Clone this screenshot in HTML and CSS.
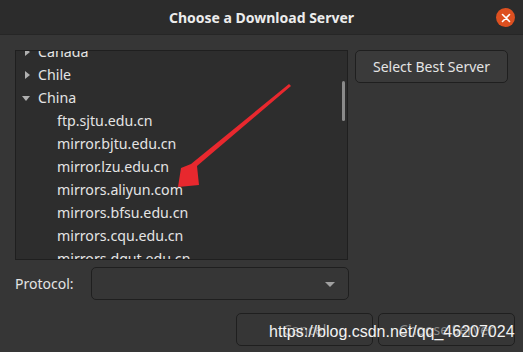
FILE: index.html
```html
<!DOCTYPE html>
<html lang="en">
<head>
  <meta charset="UTF-8">
  <title>Choose a Download Server</title>
  <link rel="stylesheet" href="styles.css">
</head>
<body>

<div class="dialog">
  <header class="titlebar">
    <h1>Choose a Download Server</h1>
    <span class="close-btn">
      <svg width="10" height="10" viewBox="0 0 10 10"><path d="M1.5 1.5 L8.5 8.5 M8.5 1.5 L1.5 8.5" stroke="#fff" stroke-width="1.6" stroke-linecap="round"/></svg>
    </span>
  </header>

  <div class="content">
    <div class="top-row">
      <!-- Lista de servidores -->
      <div class="tree">
        <ul class="tree-list">
          <li class="row"><span class="expander closed"></span>Canada</li>
          <li class="row"><span class="expander closed"></span>Chile</li>
          <li class="row"><span class="expander open"></span>China</li>
          <li class="row child">ftp.sjtu.edu.cn</li>
          <li class="row child">mirror.bjtu.edu.cn</li>
          <li class="row child">mirror.lzu.edu.cn</li>
          <li class="row child">mirrors.aliyun.com</li>
          <li class="row child">mirrors.bfsu.edu.cn</li>
          <li class="row child">mirrors.cqu.edu.cn</li>
          <li class="row child">mirrors.dgut.edu.cn</li>
        </ul>
        <div class="scrollbar"></div>
      </div>
      <div class="side">
        <button class="btn">Select Best Server</button>
      </div>
    </div>

    <div class="protocol-row">
      <label>Protocol:</label>
      <div class="combo">
        <span class="combo-arrow"></span>
      </div>
    </div>

    <div class="actions">
      <button class="btn action">Cancel</button>
      <button class="btn action">Choose Server</button>
    </div>
  </div>

  <!-- Flecha roja y marca de agua -->
  <svg class="arrow" width="523" height="352" viewBox="0 0 523 352">
    <polygon points="289,84 291,86 197,166 199,185 178,187 181,168 191,164" fill="#e8282e"/>
  </svg>
  <div class="watermark">https://blog.csdn.net/qq_46207024</div>
</div>

</body>
</html>
```

FILE: styles.css
```css
body {
  margin: 0;
  padding: 0;
  background: #363636;
  font-family: "Noto Sans", sans-serif;
}
.dialog {
  position: relative;
  width: 523px;
  height: 352px;
  background: #363636;
  color: #e4e4e4;
  overflow: hidden;
}
.titlebar {
  height: 35px;
  background: #2c2c2c;
  border-bottom: 1px solid #262626;
  box-sizing: border-box;
  display: flex;
  align-items: center;
  justify-content: center;
}
.titlebar h1 {
  margin: 0;
  font-size: 14px;
  font-weight: bold;
  color: #ececec;
}
.close-btn {
  position: absolute;
  left: 496px;
  top: 8px;
  width: 19px;
  height: 19px;
  border-radius: 50%;
  background: #dd5020;
  display: flex;
  align-items: center;
  justify-content: center;
}
.content {
  padding: 15px 15px 0 15px;
}
.top-row {
  display: flex;
  gap: 7px;
}
.tree {
  position: relative;
  width: 334px;
  height: 210px;
  box-sizing: border-box;
  border: 1px solid #1f1f1f;
  background: #2d2d2d;
  overflow: hidden;
}
.tree-list {
  list-style: none;
  margin: -11px 0 0 0;
  padding: 0;
}
.row {
  height: 23px;
  display: flex;
  align-items: center;
  padding-left: 6px;
  font-size: 14.2px;
}
.row.child {
  padding-left: 41px;
}
.expander {
  width: 16px;
  display: inline-block;
  position: relative;
  height: 10px;
}
.expander.closed::before {
  content: "";
  position: absolute;
  left: 3px;
  top: 1px;
  border-left: 5px solid #b0b0b0;
  border-top: 4px solid transparent;
  border-bottom: 4px solid transparent;
}
.expander.open::before {
  content: "";
  position: absolute;
  left: 0;
  top: 3px;
  border-top: 5px solid #b0b0b0;
  border-left: 4px solid transparent;
  border-right: 4px solid transparent;
}
.scrollbar {
  position: absolute;
  right: 2px;
  top: 30px;
  width: 3px;
  height: 40px;
  border-radius: 2px;
  background: #8a8a8a;
}
.side {
  display: flex;
  flex-direction: column;
}
.btn {
  font-family: "Noto Sans", sans-serif;
  font-size: 14px;
  color: #e4e4e4;
  background: #3a3a3a;
  border: 1px solid #1f1f1f;
  border-radius: 5px;
  height: 33px;
  width: 153px;
  padding: 0;
}
.protocol-row {
  display: flex;
  align-items: center;
  margin-top: 7px;
}
.protocol-row label {
  width: 76px;
  font-size: 14px;
}
.combo {
  position: relative;
  width: 258px;
  height: 33px;
  box-sizing: border-box;
  border: 1px solid #1f1f1f;
  border-radius: 5px;
  background: #363636;
}
.combo-arrow {
  position: absolute;
  right: 13px;
  top: 14px;
  border-top: 5px solid #a0a0a0;
  border-left: 5px solid transparent;
  border-right: 5px solid transparent;
}
.actions {
  display: flex;
  justify-content: flex-end;
  gap: 5px;
  margin-top: 13px;
  margin-right: -7px;
}
.btn.action {
  width: 137px;
  color: #8a8a8a;
  background: #363636;
}
.arrow {
  position: absolute;
  left: 0;
  top: 0;
}
.watermark {
  position: absolute;
  left: 269px;
  top: 323px;
  font-family: "Liberation Sans", Arial, sans-serif;
  font-size: 16px;
  color: #f2f2f2;
  white-space: nowrap;
}
```
